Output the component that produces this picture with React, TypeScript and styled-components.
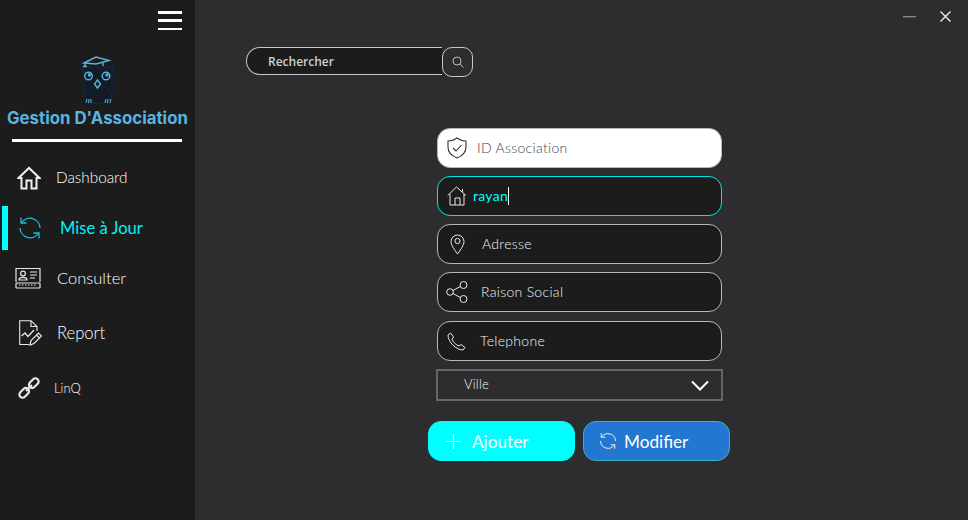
import React from 'react'
import styled, { createGlobalStyle } from 'styled-components'

const GOTHIC = `Lato, "Open Sans", sans-serif`

const Global = createGlobalStyle`
  html, body { margin: 0; padding: 0; background: #2d2d30; }
  * { box-sizing: border-box; }
`

const Shell = styled.div`
  display: flex;
  width: 968px;
  height: 520px;
  overflow: hidden;
  background: #2d2d30;
  font-family: ${GOTHIC};
  font-weight: 300;
`

const Sidebar = styled.aside`
  width: 195px;
  flex: none;
  background: #1c1c1c;
  display: flex;
  flex-direction: column;
`

const Burger = styled.div`
  align-self: flex-end;
  width: 24px;
  height: 19px;
  margin: 11px 13px 0 0;
  display: flex;
  flex-direction: column;
  justify-content: space-between;
  span { height: 2.5px; background: #fff; display: block; }
`

const LogoBox = styled.div`
  display: flex;
  justify-content: center;
  margin-top: 26px;
  padding-left: 1px;
`

const Brand = styled.div`
  margin: 2px 0 0 7px;
  height: 20px;
  line-height: 20px;
  font-family: Inter, sans-serif;
  font-size: 16.8px;
  font-weight: 700;
  color: #5ab4e0;
  white-space: nowrap;
`

const Rule = styled.div`
  width: 170px;
  height: 3px;
  margin: 11px 0 0 12px;
  background: #fff;
`

const Nav = styled.nav`
  display: flex;
  flex-direction: column;
  margin-top: 7px;
`

const NavRow = styled.div<{ $h: number; $pad: number; $gap: number; $active?: boolean; $size: number; $lift?: number }>`
  position: relative;
  height: ${p => p.$h}px;
  display: flex;
  align-items: center;
  gap: ${p => p.$gap}px;
  padding-left: ${p => p.$pad}px;
  font-size: ${p => p.$size}px;
  font-weight: ${p => (p.$active ? 400 : 300)};
  color: ${p => (p.$active ? '#00f0f8' : '#fff')};
  svg { flex: none; }
  span { padding-bottom: ${p => p.$lift ?? 0}px; }
`

const ActiveBar = styled.i`
  position: absolute;
  left: 2px;
  top: 0;
  width: 6px;
  height: 44px;
  background: #00ffff;
`

const Main = styled.main`
  flex: 1;
  display: flex;
  flex-direction: column;
`

const TitleBar = styled.div`
  height: 47px;
  display: flex;
  justify-content: flex-end;
  align-items: flex-start;
  gap: 24px;
  padding: 11px 17px 0 0;
`

const Search = styled.div`
  display: flex;
  margin-left: 51px;
`

const SearchInput = styled.div`
  width: 196px;
  height: 28px;
  background: #1c1c1c;
  border: 1px solid #c8c8c8;
  border-right: none;
  border-radius: 14px 0 0 14px;
  padding-left: 21px;
  font-family: "Open Sans", sans-serif;
  font-weight: 600;
  font-size: 12px;
  line-height: 27px;
  color: #cfcfcf;
`

const SearchButton = styled.div`
  width: 31px;
  height: 30px;
  border: 1px solid #c8c8c8;
  border-radius: 10px;
  display: flex;
  align-items: center;
  justify-content: center;
`

const Form = styled.section`
  width: 302px;
  margin: 51px 0 0 233px;
  display: flex;
  flex-direction: column;
`

const Field = styled.div<{ $variant?: 'light' | 'focus'; $gap: number; $pad: number; $mt?: number }>`
  width: 285px;
  height: 40px;
  margin: ${p => p.$mt ?? 8}px 0 0 9px;
  display: flex;
  align-items: center;
  gap: ${p => p.$gap}px;
  padding-left: ${p => p.$pad}px;
  border-radius: 13px;
  border: 1px solid ${p => (p.$variant === 'focus' ? '#00e5e5' : '#b8b8b8')};
  background: ${p => (p.$variant === 'light' ? '#fff' : '#1c1c1c')};
  color: ${p => (p.$variant === 'light' ? '#444' : p.$variant === 'focus' ? '#00ffff' : '#f4f4f4')};
  font-size: 14px;
  letter-spacing: 0.3px;
  line-height: 18px;
  svg { flex: none; }
`

const Typed = styled.span`
  border-right: 1px solid #fff;
  font-weight: 400;
`

const VilleSelect = styled.div`
  width: 287px;
  height: 32px;
  margin: 8px 0 0 8px;
  border: 2px solid #666;
  display: flex;
  align-items: center;
  justify-content: space-between;
  padding: 0 12px 0 26px;
  color: #f4f4f4;
  font-size: 13px;
  letter-spacing: 0.2px;
  span { padding-bottom: 2px; }
`

const Actions = styled.div`
  display: flex;
  gap: 8px;
  margin-top: 20px;
`

const Action = styled.div<{ $bg: string; $border: string; $gap: number; $pad: number }>`
  width: 147px;
  height: 40px;
  border-radius: 13px;
  background: ${p => p.$bg};
  border: 1px solid ${p => p.$border};
  display: flex;
  align-items: center;
  gap: ${p => p.$gap}px;
  padding-left: ${p => p.$pad}px;
  color: #fff;
  font-size: 17.2px;
  font-weight: 400;
  svg { flex: none; }
`

const Owl = () => (
  <svg width="34" height="50" viewBox="0 0 34 50" fill="none">
    <g stroke="#0f2748" strokeWidth="1.3">
      <path d="M1.5 10 L3 14 V36 C3 44 10 47.5 17 47.5 C24 47.5 31 44 31 36 V14 L32.5 10 C26 12.5 8 12.5 1.5 10Z" fill="#151b24" />
      <path d="M5 36 C9 28 25 28 29 36" />
    </g>
    <g stroke="#5ab4e0" strokeWidth="1.4">
      <path d="M3 7 L15 1 L28 4.5 L15 8 Z" />
      <path d="M4 7 V10 M2 10.5 L6 10.5 M22 7 V10" />
      <circle cx="7.5" cy="20" r="3.8" />
      <circle cx="25" cy="20" r="3.8" />
      <circle cx="8.5" cy="19" r="1" />
      <circle cx="26" cy="19" r="1" />
      <path d="M16.5 24 L19.5 28 L16.5 32 L13.5 28 Z" />
      <path d="M5 47 L6 43 M7.5 47 L8 43 M10 47 L10 43 M24 47 L25 43 M26.5 47 L27 43 M29 47 L30 43" strokeWidth="1" />
    </g>
  </svg>
)

const HomeThick = () => (
  <svg width="24" height="24" viewBox="0 0 24 24" fill="none" stroke="#f0f0f0" strokeWidth="2">
    <path d="M1.5 12 L12 2 L22.5 12 H19.5 V22.5 H14.5 V14.5 H9.5 V22.5 H4.5 V12 Z" strokeLinejoin="miter" />
  </svg>
)

const Sync = ({ size, color, w }: { size: number; color: string; w: number }) => (
  <svg width={size} height={size} viewBox="0 0 24 24" fill="none" stroke={color} strokeWidth={w}>
    <path d="M3.5 7 A10 10 0 0 1 22 12" />
    <path d="M2 12 A10 10 0 0 0 20.5 17" />
    <path d="M3 1.5 V7 H8.5" />
    <path d="M21 22.5 V17 H15.5" />
  </svg>
)

const IdCard = () => (
  <svg width="26" height="22" viewBox="0 0 26 22" fill="none" stroke="#e6e6e6" strokeWidth="1.2">
    <path d="M1 15 V1.5 H25 V15" />
    <circle cx="8" cy="6.5" r="2.4" />
    <path d="M4 13 C4 9.5 12 9.5 12 13 H4Z" />
    <path d="M15 5 H22 M15 8 H22 M15 11 H20" />
    <path d="M1 16 H25 M1 21 H25 M1 16 V21 M25 16 V21" />
    <path d="M4 18 H22" strokeDasharray="1.5 1.5" />
  </svg>
)

const ReportIcon = () => (
  <svg width="23" height="26" viewBox="0 0 23 26" fill="none" stroke="#e8e8e8" strokeWidth="1.1">
    <path d="M10 24.5 H0.7 V0.7 H12 L18 6.5 V11" />
    <path d="M12 0.7 V6.5 H18" />
    <path d="M2.5 16 L6 13 L9 16.5 L15 10" strokeWidth="1.3" />
    <path d="M11 25 L12 20.5 L19.5 13 L22.5 16 L15 23.5 Z" strokeWidth="1.2" />
    <path d="M17.5 15 L20.5 18" />
  </svg>
)

const LinkIcon = () => (
  <svg width="24" height="24" viewBox="0 0 24 24" fill="none" stroke="#e8e8e8" strokeWidth="2.2">
    <rect x="-5.5" y="-3.2" width="11" height="6.4" rx="3.2" transform="translate(7.2 16.8) rotate(-45)" />
    <rect x="-5.5" y="-3.2" width="11" height="6.4" rx="3.2" transform="translate(16.8 7.2) rotate(-45)" />
    <path d="M9 15 L15 9" />
  </svg>
)

const Shield = () => (
  <svg width="20" height="22" viewBox="0 0 20 22" fill="none" stroke="#333" strokeWidth="1.1">
    <path d="M10 1 C12.5 3 15.5 3.8 19 4 V10 C19 15.5 15 19 10 21 C5 19 1 15.5 1 10 V4 C4.5 3.8 7.5 3 10 1 Z" />
    <path d="M6 11 L9 14 L14.5 8" />
  </svg>
)

const HouseThin = () => (
  <svg width="20" height="20" viewBox="0 0 20 20" fill="none" stroke="#e8e8e8" strokeWidth="1">
    <path d="M0.7 9.5 L9.5 1 L19 9.5" />
    <path d="M3 8 V19 H17 V8" />
    <path d="M8 19 V12 H13 V19" />
    <path d="M15.5 3 V6" />
  </svg>
)

const Pin = () => (
  <svg width="15" height="21" viewBox="0 0 15 21" fill="none" stroke="#e8e8e8" strokeWidth="1">
    <path d="M7.5 20 C4 15 1 11 1 7.5 A6.5 6.5 0 0 1 14 7.5 C14 11 11 15 7.5 20 Z" />
    <circle cx="7.5" cy="7" r="2.6" />
  </svg>
)

const Share = () => (
  <svg width="22" height="22" viewBox="0 0 22 22" fill="none" stroke="#e8e8e8" strokeWidth="1">
    <circle cx="4" cy="11" r="3.3" />
    <circle cx="17.5" cy="4" r="3.5" />
    <circle cx="17.5" cy="18" r="3.5" />
    <path d="M7 9.5 L14.3 5.5 M7 12.5 L14.3 16.5" />
  </svg>
)

const Phone = () => (
  <svg width="19" height="19" viewBox="0 0 19 19" fill="none" stroke="#e8e8e8" strokeWidth="1">
    <path d="M1 3 L3.5 1 L6.5 5 L5 7 C6 10 9 13 12 14 L14 12.5 L18 15.5 L16 18 C9 18 1 10 1 3 Z" strokeLinejoin="round" />
  </svg>
)

const NAV = [
  { label: 'Dashboard', h: 57, pad: 17, gap: 15, size: 15.3, lift: 2, icon: <HomeThick /> },
  { label: 'Mise à Jour', h: 44, pad: 18, gap: 18, size: 16.6, active: true, icon: <Sync size={24} color="#16c4d4" w={1.3} /> },
  { label: 'Consulter', h: 56, pad: 15, gap: 16, size: 16.5, icon: <IdCard /> },
  { label: 'Report', h: 54, pad: 19, gap: 15, size: 16.6, icon: <ReportIcon /> },
  { label: 'LinQ', h: 56, pad: 17, gap: 13, size: 13, icon: <LinkIcon /> },
]

export default function App() {
  return (
    <>
      <Global />
      <Shell>
        <Sidebar>
          <Burger><span /><span /><span /></Burger>
          <LogoBox><Owl /></LogoBox>
          <Brand>Gestion D'Association</Brand>
          <Rule />
          <Nav>
            {NAV.map(n => (
              <NavRow key={n.label} $h={n.h} $pad={n.pad} $gap={n.gap} $size={n.size} $active={n.active} $lift={n.lift}>
                {n.active && <ActiveBar />}
                {n.icon}
                <span>{n.label}</span>
              </NavRow>
            ))}
          </Nav>
        </Sidebar>
        <Main>
          <TitleBar>
            <svg width="13" height="10" viewBox="0 0 13 10"><rect y="5" width="13" height="1.3" fill="#8a8a8a" /></svg>
            <svg width="11" height="11" viewBox="0 0 11 11" stroke="#eee" strokeWidth="1.4"><path d="M0.5 0.5 L10.5 10.5 M10.5 0.5 L0.5 10.5" /></svg>
          </TitleBar>
          <Search>
            <SearchInput>Rechercher</SearchInput>
            <SearchButton>
              <svg width="12" height="12" viewBox="0 0 12 12" fill="none" stroke="#bdbdbd" strokeWidth="1">
                <circle cx="5" cy="5" r="4" /><path d="M8 8 L11.5 11.5" />
              </svg>
            </SearchButton>
          </Search>
          <Form>
            <Field $variant="light" $gap={10} $pad={9} $mt={0}><Shield /><span>ID Association</span></Field>
            <Field $variant="focus" $gap={6} $pad={9}><HouseThin /><Typed>rayan</Typed></Field>
            <Field $gap={17} $pad={12}><Pin /><span>Adresse</span></Field>
            <Field $gap={13} $pad={8}><Share /><span>Raison Social</span></Field>
            <Field $mt={9} $gap={14} $pad={9}><Phone /><span>Telephone</span></Field>
            <VilleSelect>
              <span>Ville</span>
              <svg width="18" height="11" viewBox="0 0 18 11" fill="none" stroke="#fff" strokeWidth="2"><path d="M1 1.5 L9 9.5 L17 1.5" /></svg>
            </VilleSelect>
            <Actions>
              <Action $bg="#00ffff" $border="#00ffff" $gap={11} $pad={17}>
                <svg width="15" height="15" viewBox="0 0 15 15" stroke="#fff" strokeWidth="1.2"><path d="M7.5 0 V15 M0 7.5 H15" /></svg>
                <span>Ajouter</span>
              </Action>
              <Action $bg="#2277d0" $border="#3fb0c0" $gap={7} $pad={15}>
                <Sync size={18} color="#f0f0f0" w={1.3} />
                <span>Modifier</span>
              </Action>
            </Actions>
          </Form>
        </Main>
      </Shell>
    </>
  )
}
